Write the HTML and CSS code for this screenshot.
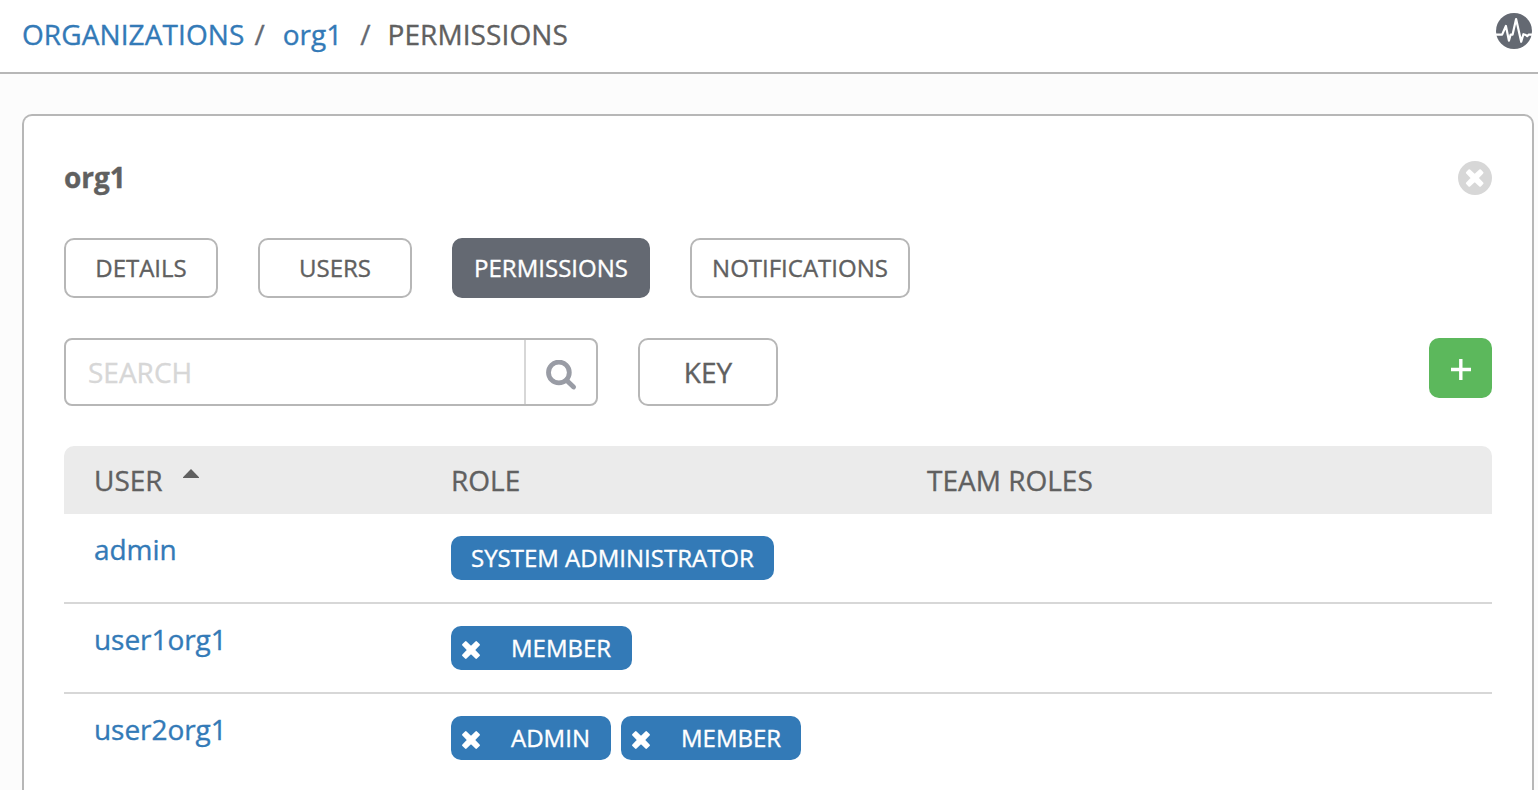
FILE: index.html
```html
<!DOCTYPE html>
<html lang="en">
<head>
<meta charset="utf-8">
<title>org1 permissions</title>
<link rel="stylesheet" href="styles.css">
</head>
<body>
<header class="topbar">
  <nav class="crumbs">
    <a class="crumb root" href="#">ORGANIZATIONS</a><span class="slash first">/</span>
    <a class="crumb" href="#">org1</a><span class="slash">/</span>
    <span class="crumb current">PERMISSIONS</span>
  </nav>
  <svg class="activity" viewBox="0 0 36 36"><circle cx="18" cy="18" r="18" fill="#646972"/><path d="M0 21.6H6.1L9.9 13L12.9 27.6L14.6 21.6H16.6L20.1 6L25.2 28.8L27.4 21.2L29.8 22L31.2 23.2L32.6 21.6H36" fill="none" stroke="#fff" stroke-width="2.2" stroke-linejoin="round"/></svg>
</header>
<main class="card">
  <div class="card-head">
    <h1 class="title">org1</h1>
    <svg class="close" viewBox="0 0 34 34"><circle cx="17" cy="17" r="17" fill="#d7d7d7"/><path d="M11.3 9.4L16.7 14.4L22.1 9.4L24.4 11.7L19.4 17L24.4 22.3L22.1 24.6L16.7 19.6L11.3 24.6L9 22.3L14 17L9 11.7Z" fill="#fff" stroke="#fff" stroke-width="2.2" stroke-linejoin="round"/></svg>
  </div>
  <div class="tabs">
    <a class="tab details">DETAILS</a>
    <a class="tab users">USERS</a>
    <a class="tab permissions">PERMISSIONS</a>
    <a class="tab notifications">NOTIFICATIONS</a>
  </div>
  <div class="tools">
    <div class="search">
      <span class="search-text">SEARCH</span>
      <span class="search-button"><svg class="search-icon" viewBox="0 0 31 31"><circle cx="12.9" cy="12.5" r="10.4" fill="none" stroke="#999ca5" stroke-width="4.8"/><path d="M20.5 20.2L27.6 27" stroke="#999ca5" stroke-width="4.8" stroke-linecap="round"/></svg></span>
    </div>
    <a class="key">KEY</a>
    <a class="add"><svg class="plus" viewBox="0 0 20 21"><path d="M0 10.5H20M9.8 0V21" stroke="#fff" stroke-width="3.4"/></svg></a>
  </div>
  <section class="table">
    <div class="row head">
      <div class="user">USER<svg class="caret" viewBox="0 0 16 9"><path d="M8 0L16 8.2V9H0V8.2Z" fill="#606060"/></svg></div>
      <div class="role">ROLE</div>
      <div class="team">TEAM ROLES</div>
    </div>
    <div class="row">
      <a class="user">admin</a>
      <div class="role"><span class="label system">SYSTEM ADMINISTRATOR</span></div>
    </div>
    <div class="row">
      <a class="user">user1org1</a>
      <div class="role"><span class="label member"><svg class="x" viewBox="0 0 18 18"><path class="x-shape" d="M3.8 1.2L9 6.2L14.2 1.2L16.8 3.8L11.8 9L16.8 14.2L14.2 16.8L9 11.8L3.8 16.8L1.2 14.2L6.2 9L1.2 3.8Z"/></svg>MEMBER</span></div>
    </div>
    <div class="row">
      <a class="user">user2org1</a>
      <div class="role"><span class="label admin"><svg class="x" viewBox="0 0 18 18"><path class="x-shape" d="M3.8 1.2L9 6.2L14.2 1.2L16.8 3.8L11.8 9L16.8 14.2L14.2 16.8L9 11.8L3.8 16.8L1.2 14.2L6.2 9L1.2 3.8Z"/></svg>ADMIN</span><span class="label member narrow"><svg class="x" viewBox="0 0 18 18"><path class="x-shape" d="M3.8 1.2L9 6.2L14.2 1.2L16.8 3.8L11.8 9L16.8 14.2L14.2 16.8L9 11.8L3.8 16.8L1.2 14.2L6.2 9L1.2 3.8Z"/></svg>MEMBER</span></div>
    </div>
  </section>
</main>
</body>
</html>
```
FILE: styles.css
```css
* { box-sizing: border-box; }
html, body { height: 100%; }
body {
  margin: 0;
  overflow: hidden;
  background: #fcfcfc;
  color: #606060;
  font-family: "Open Sans", sans-serif;
  font-size: 28px;
  -webkit-text-stroke: 0.35px;
}
a { text-decoration: none; }
svg { display: block; flex: none; }
.topbar {
  height: 74px;
  display: flex;
  justify-content: space-between;
  align-items: flex-start;
  padding: 0 6px 0 22px;
  background: #fff;
  border-bottom: 2px solid #b7b7b7;
}
.crumbs { display: flex; line-height: 69px; white-space: nowrap; }
.crumb { color: #337ab7; }
.crumb.root { letter-spacing: 0.09px; }
.crumb.current { color: #606060; letter-spacing: 0.09px; }
.slash { margin: 0 17px 0 18px; color: #646972; }
.slash.first { margin: 0 18px 0 10px; }
.activity { width: 36px; height: 36px; margin-top: 13px; }
.card {
  height: 676px;
  margin: 40px 4px 0 22px;
  padding: 0 40px;
  background: #fff;
  border: 2px solid #b7b7b7;
  border-bottom: 0;
  border-radius: 10px 10px 0 0;
}
.card-head {
  height: 122px;
  display: flex;
  align-items: center;
  justify-content: space-between;
}
.title { margin: 0; font-size: 28px; font-weight: 700; line-height: 40px; }
.close { width: 34px; height: 34px; margin-top: 2px; }
.tabs { display: flex; gap: 40px; }
.tab {
  height: 60px;
  border: 2px solid #b7b7b7;
  border-radius: 10px;
  font-size: 24px;
  line-height: 56px;
  text-align: center;
  white-space: nowrap;
}
.details, .users { width: 154px; }
.permissions { width: 198px; background: #646972; border-color: #646972; color: #fff; }
.notifications { width: 220px; }
.tools { height: 68px; display: flex; margin: 40px 0; }
.search {
  width: 534px;
  display: flex;
  border: 2px solid #b7b7b7;
  border-radius: 8px;
}
.search-text { flex: 1; padding-left: 22px; line-height: 65px; color: #d7d7d7; }
.search-button { width: 72px; border-left: 2px solid #d7d7d7; padding: 20px 0 0 20px; }
.search-icon { width: 31px; height: 31px; }
.key {
  width: 140px;
  margin-left: 40px;
  border: 2px solid #b7b7b7;
  border-radius: 10px;
  line-height: 65px;
  text-align: center;
}
.add {
  width: 63px;
  height: 60px;
  margin-left: auto;
  padding: 21px 0 0 22px;
  border-radius: 10px;
  background: #5cb85c;
}
.plus { width: 20px; height: 21px; }
.row {
  height: 90px;
  display: grid;
  grid-template-columns: 357px 476px 1fr;
  padding-left: 30px;
  border-bottom: 2px solid #d7d7d7;
  line-height: 71px;
}
.row:last-child { height: 88px; border-bottom: 0; }
.row.head {
  height: 68px;
  border: 0;
  border-radius: 10px 10px 0 0;
  background: #ebebeb;
  line-height: 69px;
}
.user { color: #337ab7; letter-spacing: -0.06px; }
.head .user { display: flex; color: inherit; letter-spacing: 0; }
.caret { width: 16px; height: 9px; margin: 23px 0 0 20px; }
.row:not(.head) .role { height: 66px; display: flex; gap: 10px; padding-top: 22px; }
.label {
  height: 44px;
  display: flex;
  align-items: center;
  border-radius: 10px;
  background: #337ab7;
  color: #fff;
  font-size: 24px;
  line-height: 44px;
  white-space: nowrap;
}
.system { width: 323px; padding-left: 20px; }
.member { width: 181px; }
.member.narrow { width: 180px; }
.admin { width: 160px; }
.x { width: 18px; height: 18px; margin: 3px 31px 0 11px; }
.x-shape { fill: #fff; stroke: #fff; stroke-width: 2.2; stroke-linejoin: round; }
```
